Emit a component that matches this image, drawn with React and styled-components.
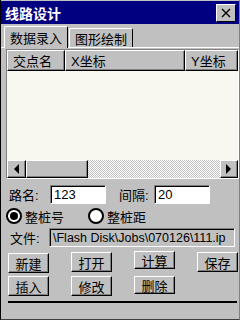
import React from 'react';
import styled, { createGlobalStyle } from 'styled-components';

const Global = createGlobalStyle`
    html, body { margin: 0; padding: 0; background: #c0c0c0; }
    body { font-family: "Liberation Sans", "Noto Sans CJK SC", sans-serif; }
`

const FONT = `"Liberation Sans", "Noto Sans CJK SC", sans-serif`;

const Window = styled.div`
    width: 240px;
    height: 320px;
    box-sizing: border-box;
    background: #c0c0c0;
    border-left: 1px solid #000;
    border-right: 1px solid #808080;
    border-bottom: 1px solid #404040;
    display: flex;
    flex-direction: column;
    font-family: ${FONT};
    font-size: 12px;
    color: #000;
`

const TitleBar = styled.div`
    height: 23px;
    margin-top: 1px;
    background: #000080;
    display: flex;
    align-items: center;
    justify-content: space-between;
    padding: 0 3px 0 4px;
    color: #fff;
    font-weight: bold;
    font-size: 14px;
`

const CloseBtn = styled.div`
    width: 20px;
    height: 18px;
    box-sizing: border-box;
    background: #c0c0c0;
    border: 1px solid;
    border-color: #fff #000 #000 #fff;
    display: flex;
    align-items: center;
    justify-content: center;
`

const TabStrip = styled.div`
    height: 24px;
    display: flex;
    align-items: flex-end;
    padding-left: 3px;
    border-bottom: 1px solid #fff;
    box-sizing: border-box;
`

const Tab = styled.div`
    height: ${p => (p.$active ? 22 : 19)}px;
    box-sizing: border-box;
    padding: 0 5px;
    margin-bottom: ${p => (p.$active ? -1 : 0)}px;
    margin-left: ${p => (p.$active ? 0 : 1)}px;
    background: #c0c0c0;
    border: 1px solid;
    border-bottom: none;
    border-color: #fff #000 #000 #fff;
    border-radius: 2px 2px 0 0;
    display: flex;
    align-items: center;
    font-size: 13px;
    position: relative;
    z-index: ${p => (p.$active ? 1 : 0)};
`

const Panel = styled.div`
    flex: 1;
    display: flex;
    flex-direction: column;
    padding: 1px 0 0 5px;
`

const ListView = styled.div`
    height: 130px;
    box-sizing: border-box;
    border: 1px solid;
    border-color: #808080 #fff #fff #808080;
    background: #f8f8f0;
    display: flex;
    flex-direction: column;
    overflow: hidden;
`

const Header = styled.div`
    height: 21px;
    display: grid;
    grid-template-columns: 58px 120px 1fr;
    flex-shrink: 0;
`

const HeadCell = styled.div`
    box-sizing: border-box;
    background: #c0c0c0;
    border: 1px solid;
    border-color: #fff #000 #000 #fff;
    box-shadow: inset -1px -1px 0 #808080;
    display: flex;
    align-items: center;
    padding-left: 5px;
    font-size: 13px;
    white-space: nowrap;
    overflow: hidden;
`

const Body = styled.div`
    flex: 1;
`

const HScroll = styled.div`
    height: 18px;
    display: flex;
    flex-shrink: 0;
    background-color: #e0e0e0;
    background-image: repeating-conic-gradient(#c0c0c0 0 25%, #fff 0 50%);
    background-size: 2px 2px;
`

const ScrollBtn = styled.div`
    width: ${p => p.$w}px;
    box-sizing: border-box;
    background: #c0c0c0;
    border: 1px solid;
    border-color: #fff #000 #000 #fff;
    box-shadow: inset -1px -1px 0 #808080;
    display: flex;
    align-items: center;
    justify-content: center;
`

const Track = styled.div`
    flex: 1;
`

const FieldRow = styled.div`
    display: flex;
    align-items: center;
    height: ${p => p.$h}px;
    margin-top: ${p => p.$mt}px;
`

const Label = styled.span`
    font-size: 13px;
    width: ${p => p.$w}px;
    padding-left: ${p => p.$pl || 0}px;
    box-sizing: border-box;
    flex-shrink: 0;
`

const Input = styled.div`
    width: ${p => p.$w}px;
    height: 19px;
    box-sizing: border-box;
    border: 1px solid;
    border-color: #808080 #fff #fff #808080;
    box-shadow: inset 1px 1px 0 #000;
    background: ${p => (p.$disabled ? '#c0c0c0' : '#fff')};
    display: flex;
    align-items: center;
    padding-left: 3px;
    font-size: ${p => (p.$disabled ? 12.5 : 13)}px;
    white-space: nowrap;
    overflow: hidden;
`

const Radio = styled.div`
    display: flex;
    align-items: center;
    gap: 3px;
    font-size: 13px;
    width: ${p => p.$w}px;
`

const RadioDot = styled.div`
    width: 16px;
    height: 16px;
    box-sizing: border-box;
    border-radius: 50%;
    border: 2px solid #000;
    background: #fff;
    display: flex;
    align-items: center;
    justify-content: center;
    &::after {
        content: '';
        width: 8px;
        height: 8px;
        border-radius: 50%;
        background: ${p => (p.$on ? '#000' : 'transparent')};
    }
`

const Buttons = styled.div`
    display: grid;
    grid-template-columns: repeat(4, 41px);
    column-gap: 22px;
    row-gap: 3px;
    margin: 4px 0 0 2px;
`

const Button = styled.div`
    height: ${p => p.$h || 20}px;
    margin-top: ${p => p.$mt || 0}px;
    box-sizing: border-box;
    background: #c0c0c0;
    border: 1px solid;
    border-color: #fff #000 #000 #fff;
    box-shadow: inset -1px -1px 0 #808080;
    display: flex;
    align-items: center;
    justify-content: center;
    font-size: 13px;
`

const Footer = styled.div`
    margin: 5px 2px 0 2px;
    border-top: 2px solid #000;
    flex: 1;
`

const Arrow = ({ dir }) => (
    <svg width="6" height="10" viewBox="0 0 6 10">
        {dir === 'left'
            ? <polygon points="5,0 5,10 0,5" fill="#000" />
            : <polygon points="0,0 0,10 5,5" fill="#000" />}
    </svg>
)

const App = () => {
    return (
        <>
            <Global />
            <Window>
                <TitleBar>
                    <span>线路设计</span>
                    <CloseBtn>
                        <svg width="10" height="10" viewBox="0 0 10 10">
                            <path d="M1 1 L9 9 M9 1 L1 9" stroke="#000" strokeWidth="1.4" />
                        </svg>
                    </CloseBtn>
                </TitleBar>
                <TabStrip>
                    <Tab $active>数据录入</Tab>
                    <Tab>图形绘制</Tab>
                </TabStrip>
                <Panel>
                    <ListView>
                        <Header>
                            <HeadCell>交点名</HeadCell>
                            <HeadCell>X坐标</HeadCell>
                            <HeadCell>Y坐标</HeadCell>
                        </Header>
                        <Body />
                        <HScroll>
                            <ScrollBtn $w={19}><Arrow dir="left" /></ScrollBtn>
                            <ScrollBtn $w={62} />
                            <Track />
                            <ScrollBtn $w={18}><Arrow dir="right" /></ScrollBtn>
                        </HScroll>
                    </ListView>
                    <FieldRow $h={19} $mt={6}>
                        <Label $w={44} $pl={3}>路名:</Label>
                        <Input $w={56}>123</Input>
                        <Label $w={48} $pl={13}>间隔:</Label>
                        <Input $w={56}>20</Input>
                    </FieldRow>
                    <FieldRow $h={18} $mt={3}>
                        <Radio $w={82}><RadioDot $on />整桩号</Radio>
                        <Radio><RadioDot />整桩距</Radio>
                    </FieldRow>
                    <FieldRow $h={19} $mt={3}>
                        <Label $w={43} $pl={4}>文件:</Label>
                        <Input $w={186} $disabled>\Flash Disk\Jobs\070126\111.ip</Input>
                    </FieldRow>
                    <Buttons>
                        <Button $mt={2}>新建</Button>
                        <Button $mt={1}>打开</Button>
                        <Button $h={18}>计算</Button>
                        <Button $mt={1}>保存</Button>
                        <Button>插入</Button>
                        <Button>修改</Button>
                        <Button $h={18}>删除</Button>
                    </Buttons>
                    <Footer />
                </Panel>
            </Window>
        </>
    )
}

export default App
